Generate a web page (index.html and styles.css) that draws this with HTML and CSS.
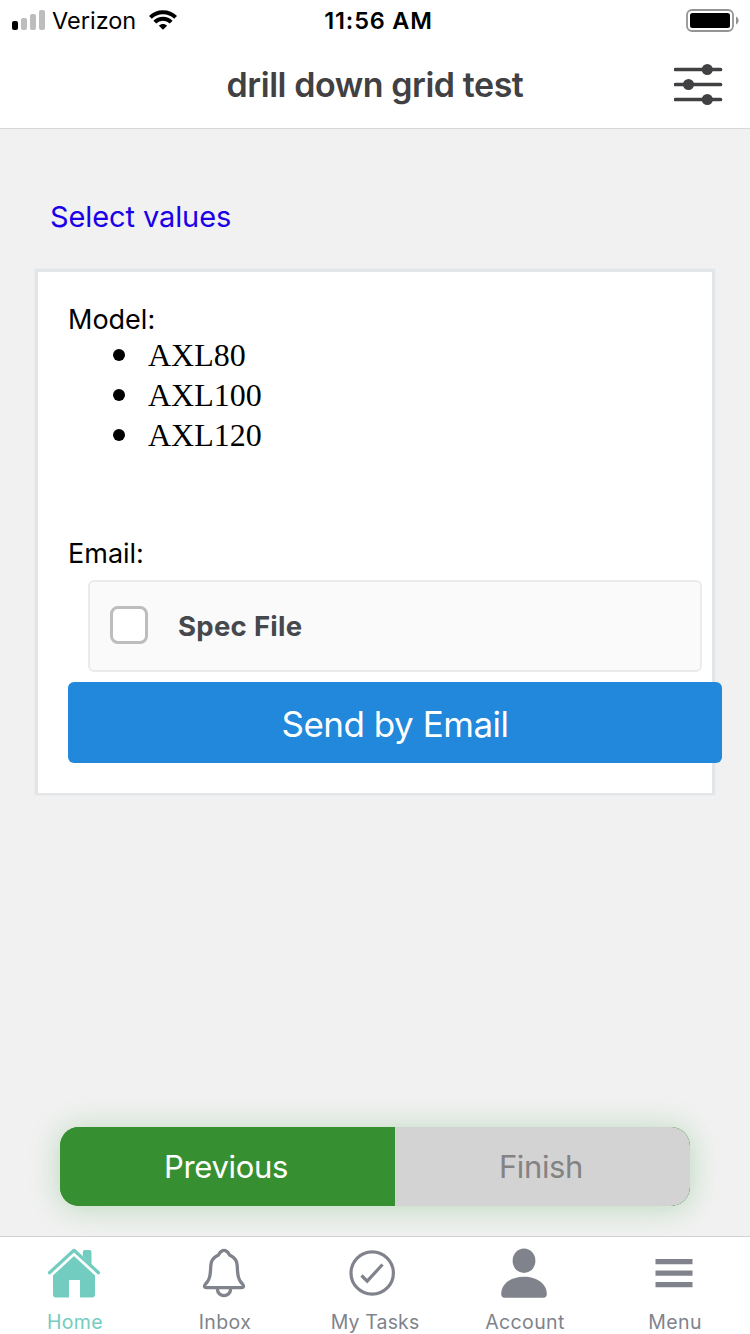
FILE: index.html
```html
<!DOCTYPE html>
<html lang="en">
<head>
<meta charset="utf-8">
<title>drill down grid test</title>
<link rel="stylesheet" href="styles.css">
</head>
<body>
<div class="screen">
  <div class="status">
    <div class="status-left">
      <svg class="signal" width="34" height="20" viewBox="0 0 34 20"><rect x="0" y="11" width="6" height="9" rx="2" fill="#000"/><g fill="#bdbdbd"><rect x="9" y="8" width="6" height="12" rx="2"/><rect x="18" y="4" width="6" height="16" rx="2"/><rect x="27" y="0" width="6" height="20" rx="2"/></g></svg>
      <span class="carrier">Verizon</span>
      <svg class="wifi" width="28" height="20" viewBox="0 0 28 20"><g fill="none" stroke="#000" stroke-width="4"><path d="M1.400 7.400C8.200 .4 19.800 .4 26.600 7.400"/><path d="M5.800 12.100C10.300 7.600 17.700 7.600 22.200 12.100"/></g><path d="M14 19.800 9.900 15.700C12.200 13.400 15.800 13.400 18.100 15.700Z"/></svg>
    </div>
    <span class="time">11:56 AM</span>
    <svg class="battery" width="54" height="24" viewBox="0 0 54 24"><rect x="1" y="1" width="46" height="21" rx="5" fill="none" stroke="#949494" stroke-width="1.800"/><rect x="4" y="4" width="40" height="15" rx="2.500"/><path d="M50 7.500C53.500 9 53.500 14 50 15.500Z" fill="#949494"/></svg>
  </div>
  <header class="header">
    <h1 class="title">drill down grid test</h1>
    <svg class="filter" width="50" height="44" viewBox="0 0 50 44"><g stroke="#414042" stroke-width="3.700" stroke-linecap="round"><path d="M1.500 7.500H46.500M1.500 22.500H46.500M1.500 37.500H46.500"/></g><g fill="#414042"><circle cx="33.300" cy="7.500" r="5.500"/><circle cx="14.500" cy="22.500" r="5.500"/><circle cx="33.300" cy="37.500" r="5.500"/></g></svg>
  </header>
  <main class="content">
    <a class="select">Select values</a>
    <section class="card">
      <div class="label model">Model:</div>
      <ul class="models"><li>AXL80</li><li>AXL100</li><li>AXL120</li></ul>
      <div class="label email">Email:</div>
      <div class="option"><span class="checkbox"></span><span class="option-text">Spec File</span></div>
      <div class="send"><span>Send by Email</span></div>
    </section>
    <div class="actions">
      <div class="previous"><span>Previous</span></div>
      <div class="finish"><span>Finish</span></div>
    </div>
  </main>
  <nav class="tabs">
    <div class="tab active">
      <svg width="54" height="52" viewBox="0 0 54 52"><path d="M6 26.500 27 7 48 26.500V46.500a3 3 0 0 1-3 3H33V32H22V49.500H9a3 3 0 0 1-3-3Z" fill="currentColor"/><path d="M2.300 25.700 27 3 51.700 25.700" fill="none" stroke="#fff" stroke-width="7.500" stroke-linejoin="round"/><path d="M35.800 8V4a2 2 0 0 1 2-2h4.700a2 2 0 0 1 2 2V17Z" fill="currentColor"/><path d="M2.500 24.700 27 2.300 51.500 24.700" fill="none" stroke="currentColor" stroke-width="3.200" stroke-linecap="round" stroke-linejoin="round"/></svg>
      <span class="tab-label">Home</span>
    </div>
    <div class="tab">
      <svg width="54" height="52" viewBox="0 0 54 52"><g fill="none" stroke="currentColor" stroke-width="3.300" stroke-linejoin="round"><path d="M27 2.300C23.500 2.300 22.700 5 21.500 7C15.500 9.700 13.700 13.500 13.700 18.500C13.500 29 12 32.500 8.600 36C6.600 38.500 7.400 39.700 9.500 39.700H44.500C46.600 39.700 47.400 38.500 45.400 36C42 32.500 40.500 29 40.300 18.500C40.300 13.500 38.500 9.700 32.500 7C31.300 5 30.500 2.300 27 2.300Z"/><path d="M20.300 41C21 49.800 33 49.800 33.700 41"/></g></svg>
      <span class="tab-label">Inbox</span>
    </div>
    <div class="tab">
      <svg width="54" height="52" viewBox="0 0 54 52"><g fill="none" stroke="currentColor"><circle cx="25.200" cy="25" r="21.200" stroke-width="3.200"/><path d="m14.500 27.500 5.700 5.700L35.500 16.500" stroke-width="3.200"/></g></svg>
      <span class="tab-label tasks">My Tasks</span>
    </div>
    <div class="tab">
      <svg width="54" height="52" viewBox="0 0 54 52"><g fill="currentColor"><ellipse cx="27" cy="12.700" rx="11.400" ry="12.300"/><path d="M4.200 46C4.200 35.500 14.200 28.700 27 28.700S49.800 35.500 49.800 46C49.800 48.500 48.500 49.800 46.500 49.800H7.500C5.500 49.800 4.200 48.500 4.200 46Z"/></g></svg>
      <span class="tab-label">Account</span>
    </div>
    <div class="tab">
      <svg width="54" height="52" viewBox="0 0 54 52"><path d="M8.500 11h37v5.200h-37ZM8.500 22.500h37v5.200h-37ZM8.500 34h37v5.200h-37Z" fill="currentColor"/></svg>
      <span class="tab-label">Menu</span>
    </div>
  </nav>
</div>
</body>
</html>
```
FILE: styles.css
```css
* { box-sizing: border-box; }
body { margin: 0; font-family: Inter, "Noto Sans", sans-serif; color: #000; }
svg { display: block; flex: none; }
.screen { width: 750px; height: 1334px; display: flex; flex-direction: column; background: #f1f1f1; overflow: hidden; }
.status { height: 41px; flex: none; background: #fff; display: grid; grid-template-columns: 1fr 120px 1fr; align-items: start; justify-items: center; }
.status-left { justify-self: start; display: flex; align-items: center; padding-left: 12px; }
.signal { margin-top: -1px; }
.carrier { font-size: 23.5px; line-height: 41px; margin-left: 6px; width: 97px; white-space: nowrap; }
.wifi { margin-top: -1px; }
.time { font-size: 23.5px; line-height: 42px; font-weight: 600; letter-spacing: .8px; white-space: nowrap; margin-left: 7px; }
.battery { justify-self: end; margin: 9px 10px 0 0; }
.header { height: 88px; flex: none; background: #fff; border-bottom: 1px solid #d7d7d7; display: grid; grid-template-columns: 100px 1fr 100px; align-items: center; }
.title { grid-column: 2; margin: 0; text-align: center; font-size: 34px; line-height: 86px; font-weight: 600; letter-spacing: -.45px; color: #414042; white-space: nowrap; }
.filter { margin: -2px 0 0 24px; }
.content { flex: 1; min-height: 0; display: flex; flex-direction: column; }
.select { display: block; margin: 68px 0 32px 50px; font-size: 29px; line-height: 40px; letter-spacing: -.1px; color: #1a00e6; white-space: nowrap; }
.card { width: 680px; height: 526px; margin-left: 35px; flex: none; background: #fff; border: 3px solid #e2e6e9; border-bottom-width: 2px; box-shadow: 0 0 1px #d8dcdf; padding: 29px 10px 0 30px; display: flex; flex-direction: column; }
.label { font-size: 27px; line-height: 38px; white-space: nowrap; }
.models { margin: -4px 0 0; padding-left: 80px; font: 32px/40px "Liberation Serif", serif; list-style: none; }
.models li { display: flex; align-items: center; }
.models li::before { content: ""; width: 12px; height: 12px; border-radius: 50%; background: #000; margin: 0 23px 0 -35px; }
.email { margin-top: 80px; }
.option { height: 92px; margin: 7px 0 10px 20px; flex: none; border: 2px solid #ebebeb; border-radius: 6px; background: #fafafa; display: flex; align-items: center; padding-left: 20px; }
.checkbox { width: 38px; height: 38px; border: 3px solid #bdbdbd; border-radius: 8px; background: #fff; margin: 0 30px 2px 0; }
.option-text { font-size: 27.5px; font-weight: 700; letter-spacing: .3px; color: #45484d; white-space: nowrap; }
.send { width: 654px; height: 81px; flex: none; border-radius: 6px; background: #2188dc; color: #fff; font-size: 35px; line-height: 85px; letter-spacing: -.48px; text-align: center; }
.actions { margin: auto 60px 30px; height: 79px; flex: none; display: flex; border-radius: 19px; overflow: hidden; background: #369032; box-shadow: 0 2px 30px rgba(54,160,60,.3); color: #fff; font-size: 31px; line-height: 80px; letter-spacing: -.35px; text-align: center; }
.previous { width: 335px; padding-right: 3px; background: #369032; }
.finish { width: 295px; padding-right: 3px; background: #d3d3d3; color: #838383; border-radius: 0 19px 19px 0; }
.tabs { height: 98px; flex: none; background: #fff; border-top: 1px solid #d2d2d2; display: grid; grid-template-columns: repeat(5, 150px); position: relative; }
.tab { display: flex; flex-direction: column; align-items: center; padding-top: 11px; color: #80838c; font-size: 19.5px; letter-spacing: .4px; line-height: 30px; }
.tab svg { margin-left: -2px; }
.tab-label { margin-top: 7px; white-space: nowrap; }
.tasks { letter-spacing: .15px; }
.active { color: #72cdc0; }
```
